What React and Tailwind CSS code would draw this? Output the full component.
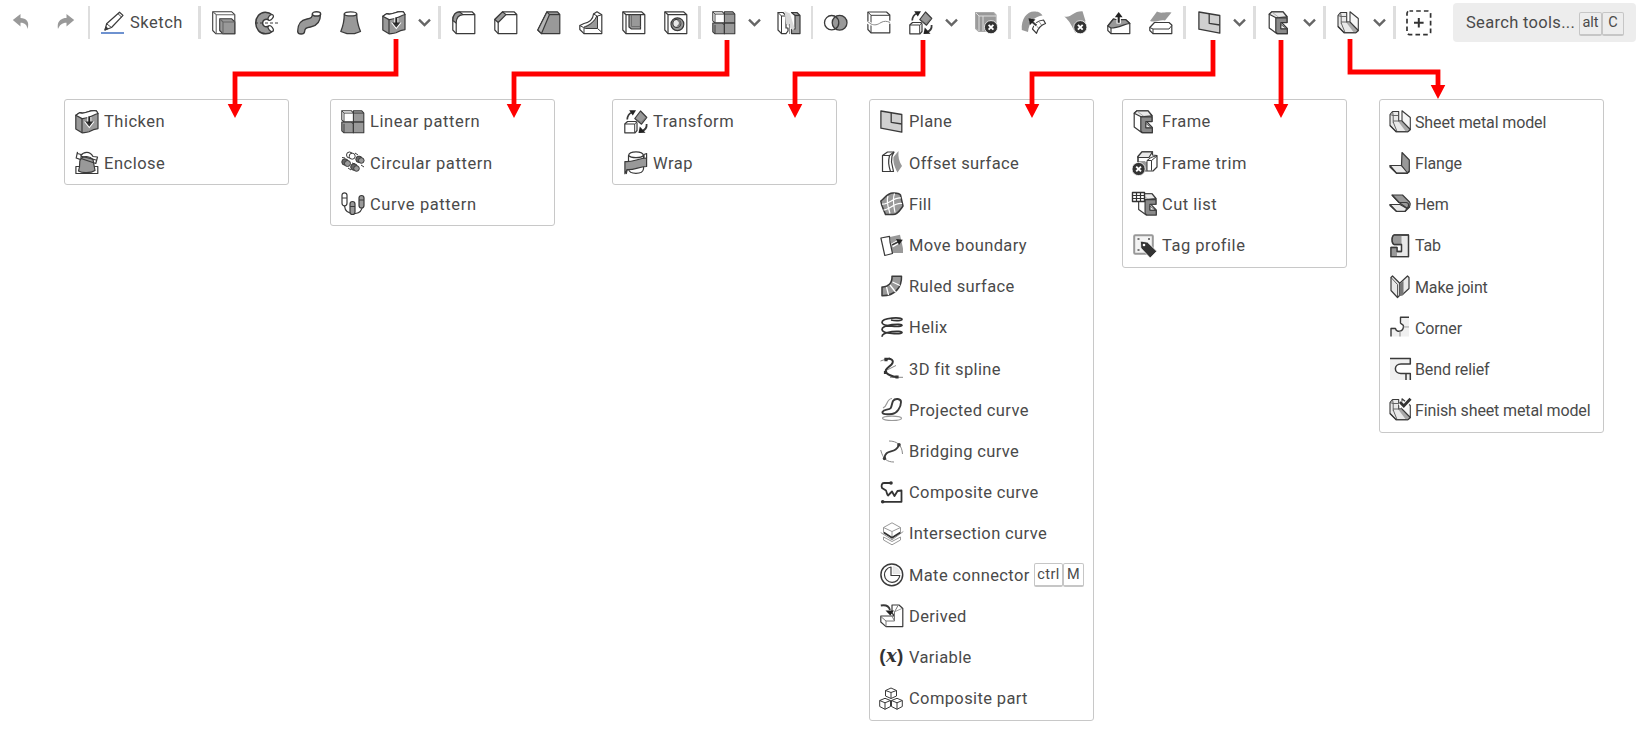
import React from "react";

const D = "#3a3a3a";
const G = "#999999";
const L = "#e9e9e9";
const W = "#ffffff";

function Svg({ children, className = "w-6 h-6", box = "0 0 24 24" }) {
  return (
    <svg
      viewBox={box}
      className={`shrink-0 ${className}`}
      fill="none"
      stroke={D}
      strokeWidth="1.2"
      strokeLinejoin="round"
    >
      {children}
    </svg>
  );
}

const CrossBadge = ({ x, y }) => (
  <g>
    <circle cx={x} cy={y} r="6.6" fill="#333" stroke={W} strokeWidth="0.8" />
    <path d={`M${x - 2.4} ${y - 2.4}l4.8 4.8m0-4.8l-4.8 4.8`} stroke={W} strokeWidth="1.9" />
  </g>
);

const FrameShape = () => (
  <g>
    <path d="M1.2 3.2L4 .8H15L19 5.5V11.5H13.5L19.3 17.5V22.7H9L1.2 17Z" fill={W} />
    <path d="M1.2 3.2L4 .8H15L19 5.8L8 6.8Z" fill={L} />
    <path d="M4.5 1.5L11 6.5" stroke={G} strokeWidth="0.8" />
    <path d="M7.8 6.8H19V11.6H12.8V17.8H19.3V22.7H9.5L7.8 21Z" fill="#8a8a8a" />
    <path d="M13 13.5L18.3 17.6H13Z" fill={L} strokeWidth="0.8" />
  </g>
);

const SheetShape = () => (
  <g strokeWidth="1.1">
    <path d="M1 4.5L3.5 1.5H9.7V11H13L21.3 19.5L19 21.7H7L1 15.5Z" fill={L} />
    <path d="M1 4.5L4.2 5.5V12.5M3.5 1.5L4.2 5.5H9.7M4.2 11H12.5M4.2 12L8 21.5" stroke="#555" strokeWidth="0.9" />
    <path d="M13 11L21.3 19.5L19 21.7H17L9.7 12Z" fill="#a8a8a8" stroke="none" />
    <path d="M13 .8L21.3 7.5V19.5L13 11Z" fill="#f6f6f6" />
    <path d="M1 15.5L7 21.7H19L21.3 19.5" />
  </g>
);

const icons = {
  undo: <path d="M.8 8L8.5 2V6C14 6 18 9.5 15.5 17C15 13 13 10.7 8.5 10.7V14.5Z" fill={G} stroke="none" />,
  redo: <path d="M17.2 8L9.5 2V6C4 6 -.5 9.5 1 17C2.5 13 5 10.7 9.5 10.7V14.5Z" fill={G} stroke="none" />,
  pen: (
    <g>
      <path d="M4 19L5.6 12.8L18.5 1.2L22 4.4L10.5 16.5Z" fill={W} />
      <path d="M5.6 12.8L10.5 16.5M17 2.7L20.5 6" strokeWidth="0.9" />
      <path d="M4 19L5 16L6.7 17.8Z" fill={D} />
      <path d="M0 22H23" stroke="#4a77c4" strokeWidth="1.6" />
    </g>
  ),
  extrude: (
    <g strokeWidth="1.1">
      <path d="M.7.7H19.5L22.8 3.6V22.8H4L.7 19.5Z" fill={W} />
      <path d="M.7.7L4.2 3.7H22.8M4.2 3.7V22.8" stroke="#666" />
      <path d="M7.7 7.7H19.5L22.8 11V22.8H11L7.7 19.5Z" fill={G} />
      <path d="M7.7 7.7L11 11H22.8M11 11V22.8" stroke="#666" />
    </g>
  ),
  revolve: (
    <g>
      <path d="M18.5 4C14 .2 8 .2 4.5 4.3C.8 8.7 .8 15.3 4.5 19.7C8 23.8 15 23.8 19 20L14.5 15.3C10.5 17 8.5 14 8.6 12C8.7 9.6 11 7.3 14.5 8.8Z" fill={G} strokeWidth="1.5" />
      <ellipse cx="16.7" cy="6.4" rx="2" ry="3.3" transform="rotate(40 16.7 6.4)" fill={W} />
      <ellipse cx="16.7" cy="17.6" rx="2" ry="3.3" transform="rotate(-40 16.7 17.6)" fill={W} />
      <path d="M1 12H24" strokeDasharray="3 2" strokeWidth="1" />
    </g>
  ),
  sweep: (
    <g strokeWidth="1.4">
      <path d="M15.5 2.8C15.5 6.5 14 7.3 10 8C4 9 .7 12 .7 20.5C1 23.9 7.2 23.9 7.6 20.5C7.8 17.5 9 16.8 13.5 16C21 14.8 23.5 10 23.5 3Z" fill={G} />
      <ellipse cx="19.5" cy="2.9" rx="4.1" ry="2.1" fill={W} />
    </g>
  ),
  loft: (
    <g strokeWidth="1.3">
      <path d="M4.3 3C4.3 10 3.5 14 .8 20.5L7 22.6H14.5L20.5 20.5C17.8 14 16.7 10 16.7 3Z" fill={G} />
      <ellipse cx="10.5" cy="2.9" rx="6.2" ry="2" fill={W} />
    </g>
  ),
  thicken: (
    <g>
      <path d="M.8 5.2L5 2.6C10 5 14-.6 21.3.8L23 3.5V18.6C19 19 17 20 14 21.8C11 23 9 22.3 7 22.8L.8 19Z" fill={G} />
      <path d="M.8 5.2L5 2.6C10 5 14-.6 21.3.8L23 3.5C18 4.5 14 9 7 8.6Z" fill={W} />
      <path d="M7 8.6V22.8" />
      <path d="M14.3 7V14" stroke={W} strokeWidth="4" />
      <path d="M9.5 11.5L14.3 17.5L19 11.5" fill="#333" stroke={W} strokeWidth="1.2" />
      <path d="M14.3 6.5V13" stroke="#222" strokeWidth="2" />
    </g>
  ),
  fillet: (
    <g>
      <path d="M7.5.8H20L22.8 3.5V22.6H4.2L.8 19V9C.8 4 3.5.8 7.5.8Z" fill={W} />
      <path d="M7.5.8C3.5.8.8 4 .8 9.5L4.2 12C4.2 7 6.5 4 11 3.6Z" fill={G} />
      <path d="M11 3.6H22.8M4.2 12V22.6" />
    </g>
  ),
  chamfer: (
    <g>
      <path d="M8.5.8H20L22.8 3.5V22.6H4.2L.8 19V8.5Z" fill={W} />
      <path d="M8.5.8L.8 8.5L4.2 11.5L12 3.6Z" fill={G} />
      <path d="M12 3.6H22.8M4.2 11.5V22.6" />
    </g>
  ),
  draft: (
    <g>
      <path d="M10 .8H20.5L22.8 3.5V22.6H4.5L.8 19Z" fill={G} />
      <path d="M10 .8L.8 19L4.5 22.6L12.5 3.6Z" fill="#b5b5b5" />
      <path d="M12.5 3.6H22.8" />
    </g>
  ),
  rib: (
    <g>
      <path d="M14.5 3L18 .8L22.8 3.8V22.6H5L.8 18.5V14.5L5 12.5C10 11.5 14 8 14.5 3Z" fill={W} />
      <path d="M4.5 15.5C10 14 16 9 17.5 4.5L18.5 5V17.5H6.5Z" fill={G} stroke="none" />
      <path d="M.8 14.5L4.5 16.5C11 14.5 16 10 17.8 4.8L14.5 3" strokeWidth="1" />
      <path d="M18.5 5V17.5H6.5L5 16.8V22.6M18.5 5L22.8 3.8M18.5 17.5L22.5 21" strokeWidth="1" />
    </g>
  ),
  shell: (
    <g>
      <path d="M.8.8H19.5L22.8 3.7V22.6H4L.8 19Z" fill={W} />
      <path d="M.8.8L4 3.7H22.8M4 3.7V22.6" />
      <path d="M7 3.7H18.5V18H9.5L7 16Z" fill={G} />
      <path d="M9.5 3.7V15.5H18.5" strokeWidth="0.8" stroke="#666" />
    </g>
  ),
  hole: (
    <g>
      <path d="M.8.8H19.5L22.8 3.7V22.6H4L.8 19Z" fill={W} />
      <path d="M.8.8L4 3.7H22.8M4 3.7V22.6" />
      <circle cx="13.4" cy="13.2" r="6.4" fill={G} />
      <circle cx="12.8" cy="12.4" r="4" fill={L} />
      <path d="M13.5 8.8C16.8 10 16.5 14 13.5 15.6" strokeWidth="1.8" stroke="#777" />
    </g>
  ),
  linear: (
    <g strokeWidth="1.1">
      <path d="M.8 12H10.5L12.4 13.8V22.8H3L.8 20.8Z" fill={G} />
      <path d="M12.4.8H20.8L22.8 3V11.8H12.4Z" fill={G} />
      <path d="M12.4 12.2H22.8V22.8H12.4Z" fill={G} />
      <path d="M.8.8H10.5L12.4 3V11.8H3L.8 9.8Z" fill={W} />
      <path d="M.8.8L3 3.1H12.4M3 3.1V11.8M12.4 3.1H22.8M3 13.8V22.8" strokeWidth=".9" />
    </g>
  ),
  mirror: (
    <g>
      <path d="M1 1.5H6L9 4.5V17H11V20L9 22.6H4.5L1 19Z" fill={W} />
      <path d="M1 1.5L4.5 5V22.6M4.5 5H9" strokeWidth="1" />
      <path d="M14.5 1.5H20L23 4.5V22.6H14.5V18H18V4.5Z" fill={G} />
      <path d="M18 4.5H23" />
      <path d="M7.5 0L13 2.5L17.5 17L16 19.5L9 12.5Z" fill="#d9d9d9" stroke="none" />
      <path d="M12.5 13V23" strokeWidth=".8" stroke="#777" />
    </g>
  ),
  boolean: (
    <g strokeWidth="1.3">
      <circle cx="7.7" cy="11.7" r="7.2" />
      <circle cx="15.6" cy="11.7" r="7.4" fill={G} stroke={D} />
      <path d="M11.7 5.8A7.2 7.2 0 0 1 11.7 17.6" />
    </g>
  ),
  split: (
    <g>
      <path d="M.9 1H19.5L22.8 4V21.8H4L.9 18.5Z" fill={W} />
      <path d="M.9 1L4 4.3H22.8M4 4.3V21.8" strokeWidth="1" />
      <path d="M0 11C5 14 8 14.5 13 11.5C17 9.5 19 10 24 11.5" stroke={W} strokeWidth="3" />
      <path d="M.4 10.4L4 13C8 14.5 10 14 14 11.5C17 9.8 20 10 23 11.5" stroke="#888" strokeWidth="1" />
    </g>
  ),
  transform: (
    <g>
      <path d="M.8 14L3.5 11.5H12L13 13V20.5L11 22.8H.8Z" fill={W} />
      <path d="M.8 14H10.7V22.8M10.7 14L13 11.8" strokeWidth="1" />
      <path d="M16.5 1L22.8 7.5L17.5 14.2L10.8 8.5Z" fill={G} />
      <path d="M12.5 9.8L17 12.5L22 7.5" strokeWidth=".7" stroke="#666" />
      <path d="M3.2 9.5C3.5 5.5 5 3.5 8 2.5" strokeWidth="1.7" />
      <path d="M5.2.3L12 .3L8.8 5.5Z" fill="#222" stroke="none" />
      <path d="M22.6 14C23 18 21 20 18 21" strokeWidth="1.8" />
      <path d="M14.5 22.9L15.8 16.5L21.5 22.7Z" fill="#222" stroke="none" />
    </g>
  ),
  deletePart: (
    <g>
      <path d="M.6 1.5H18.5L21 4V14L14 20.5H4L.6 17.5Z" fill={G} stroke="#aaa" />
      <path d="M1 2L4 5H21M4 5V20M8 5V20" stroke="#ddd" strokeWidth="1" />
      <CrossBadge x={16} y={16.2} />
    </g>
  ),
  modifyFillet: (
    <g>
      <path d="M.8 19C0 8 6 .6 13 .6C17 .6 19 1.2 21.5 4.5C14 5 8 11 7 21Z" fill={G} stroke="none" />
      <path d="M11.5 18C13 12.5 17 9.5 22.5 9L24.5 12.5C20 14 17 17 15.5 22.3Z" fill={W} />
      <path d="M14 13.5L18 17.5M18 10.5L20.5 14" strokeWidth=".8" stroke="#777" />
      <path d="M16 15L9 9" strokeWidth="4" stroke={W} />
      <path d="M15.5 14.5L9 9" strokeWidth="2" />
      <path d="M7.5 7.2L14.5 8.4L9 14Z" fill="#222" stroke="none" />
    </g>
  ),
  deleteFace: (
    <g>
      <path d="M.3 5.5C7 7.5 9 0 18.5.3L21.5 10C18 17 14 14 11.5 22C8 16 6 10 .3 5.5Z" fill={G} stroke="none" />
      <CrossBadge x={16.3} y={16.2} />
    </g>
  ),
  moveFace: (
    <g>
      <path d="M.8 15L6.5 8C10 9.5 14 8.5 18.5 8.5L22.8 12.5V22.6H4L.8 19.5Z" fill={W} />
      <path d="M.8 15L6.5 8C10 9.5 14 8.5 18.5 8.5L22.8 12.5C18 12.5 12 17 4 17Z" fill={G} />
      <path d="M4 17V22.6" />
      <path d="M11.7 12.5V5" stroke={W} strokeWidth="4.4" />
      <path d="M11.7 11.8V4" strokeWidth="2.1" stroke="#222" />
      <path d="M7.8 6.2L11.7 1L15.6 6.2Z" fill="#222" stroke="none" />
    </g>
  ),
  replaceFace: (
    <g>
      <path d="M1 10L8 .6C12 3 16 .5 22.5 1.5L16 9.5C11 8 7 12 1 10Z" fill={G} stroke="none" />
      <path d="M.8 16.5L5.5 11.5H20L22.8 14V22.6H4L.8 19.5Z" fill={W} />
      <path d="M.8 16.5L4 18H20L22.8 14.5M4 18V22.6" strokeWidth="1" />
    </g>
  ),
  plane: (
    <g strokeWidth="1.3">
      <path d="M.9 1L21.8 4.5V22.2L.9 18.2Z" fill="#d0d0d0" />
      <path d="M11.2 2.8V12.3L21.8 14" />
    </g>
  ),
  frame: <FrameShape />,
  sheet: <SheetShape />,
  enclose: (
    <g>
      <path d="M.9 15.5H6V19H17.5V15.5H22.8V22.5H.9Z" fill={W} />
      <path d="M5.5 8.5C3.5 10.5 6 14 3.5 20C7 22.3 16 22.3 20 19.5L18 8.5C15 5 8 4 5.5 8.5Z" fill={G} />
      <path d="M2.5.8L1.2 7L5 8.4M5.5 4.8C9 0 15 0 18 5.5L22.5 6L20.8 12.5L6 7.5V3.5L2.5 2.5M5.5 5L21 9" />
    </g>
  ),
  circular: (
    <g strokeWidth="1">
      <circle cx="4" cy="11" r="3.2" fill="#666" />
      <circle cx="6.5" cy="12.5" r="3" fill={G} />
      <circle cx="8.5" cy="4" r="3" fill={W} />
      <circle cx="11.2" cy="5.2" r="3" fill={W} />
      <circle cx="18" cy="8.3" r="3.2" fill="#666" />
      <circle cx="20.3" cy="9.5" r="2.8" fill={G} />
      <circle cx="13" cy="16" r="3.3" fill="#666" />
      <circle cx="15.5" cy="17.5" r="2.8" fill={G} />
      <path d="M1 6.5L4 7M11 12l3 1M20 14l3 2M7 17l3 2M14 2l3 2" />
    </g>
  ),
  curvePattern: (
    <g>
      <path d="M3.5 14C4 19 8 22 14.5 21.5C18 21 21 19 21.3 14" />
      <rect x="1" y=".8" width="5" height="13" rx="2.5" fill={W} />
      <rect x="9" y="9.5" width="5" height="13" rx="2.5" fill={G} />
      <rect x="18" y="3.5" width="5" height="12.5" rx="2.5" fill={G} />
      <path d="M1 6H6M9 14.5H14M18 8H23" strokeWidth="1" />
    </g>
  ),
  wrap: (
    <g>
      <path d="M4.5 18V4.5C5.5-.3 18.5-.3 19.5 4.5V18C18.5 23.8 5.5 23.8 4.5 18Z" fill={W} />
      <path d="M4.5 4.5C7 7.3 17 7.3 19.5 4.5" />
      <path d="M.9 10.5C8 11.5 14 7.5 22.6 7V15.5C14 16 9 19.5 3.2 18.5L.9 22.8Z" fill={G} />
      <path d="M3.2 18.5L2.2 23M20 7V3.5L22.6 2.5V7" />
    </g>
  ),
  offset: (
    <g>
      <path d="M2.5 4.5L7.5 1H14L12 5L11.5 11L13.5 20.5H2.5Z" fill={W} />
      <path d="M2.5 4.5H9.5L14 1M9.5 4.5C8 11 8.5 14 10.5 20.5" />
      <path d="M13.5 6L18.5 0C18 6 19 10 22 15L17.5 21.5C14 15 13 11 13.5 6Z" fill={G} stroke="none" />
    </g>
  ),
  fill: (
    <g>
      <path d="M.8 9C5 6 7 1 13 .9C17 .8 19 .9 20.5 3L23 14C20 18 18 22.5 13 22.6H5.5C4 18 1.5 15 .8 9Z" fill={G} strokeWidth="1.5" />
      <path d="M8 4C6 10 8 14 10 21.5M14.5 1.5C12 8 14 14 15 20.5M2 12C8 13 14 5 21 6M3.5 18C9 18 15 10 22 11.5" stroke={W} strokeWidth="1.2" />
    </g>
  ),
  moveBoundary: (
    <g>
      <path d="M10 3L20 .8L23 14.5V19H12Z" fill={G} stroke="none" />
      <path d="M.9 4L9.5 2.3L10 8L12.5 19.5L4.8 21.5Z" fill={W} />
      <path d="M12 11.5L19 7.5" stroke={W} strokeWidth="4" />
      <path d="M12 11L19 7.5" strokeWidth="1.7" />
      <path d="M16 5L22.8 5.8L19 11Z" fill="#222" stroke="none" />
    </g>
  ),
  ruled: (
    <g>
      <path d="M12 1.2H21.5C22 12 15 21 2 20.8V12C8 12.5 12.5 8 12 1.2Z" fill={G} strokeWidth="1.5" />
      <path d="M12.5 7L20 10.5M10 10L15.5 17M6.5 12L8.5 20" stroke={W} strokeWidth="1.3" />
    </g>
  ),
  helix: (
    <g strokeWidth="1.7" stroke="#333">
      <path d="M11 4C15 5 22 5 22 3.2C22 1 2 1.5 2 6.5C2 10.5 22 11.5 22 9.3C22 7 2 8.5 2 13.5C2 18 22 18.7 22 16.5C22 14.3 2 15 2 20.8" />
    </g>
  ),
  spline: (
    <g stroke="#333">
      <path d="M.5 4L10 .8M5 14L16 8.5M10 20.3H23" stroke="#888" strokeWidth="1" />
      <path d="M5 2.5C11 .5 15 3.5 11.5 7.5C8 11 3.5 13 6.5 16C9 18.5 13 19.5 17 20" strokeWidth="2" />
      <path d="M6 .8v3.4M5.5 14v3M17 18.5v3" strokeWidth="3.2" />
    </g>
  ),
  projected: (
    <g>
      <ellipse cx="12" cy="20.3" rx="9.5" ry="2.2" stroke={G} />
      <path d="M12 .5C6 1 8 8 3 10" stroke={G} />
      <path d="M13 3C15 0 21 .5 21 4C21 9 17 15.5 12 16C8 16.3 1.5 16.8 2.5 13.8C4 10.8 9 12.5 10.8 10C12 7 12 5 13 3Z" strokeWidth="1.9" />
    </g>
  ),
  bridging: (
    <g>
      <path d="M9 1C17 1 22 5 22.5 14M.7 10C3 19 7 22 14 22" stroke="#888" strokeWidth="1" />
      <path d="M4.5 18.5C5 8 16 15 19 4.5" strokeWidth="1.9" />
      <circle cx="4.5" cy="18.5" r="1.7" fill={D} stroke="none" />
      <circle cx="19" cy="4.8" r="1.8" fill={D} stroke="none" />
    </g>
  ),
  compositeCurve: (
    <g stroke="#333">
      <path d="M11 2H4C1.5 2 1.2 5 2 7L6 9.5C7 12 7 14 8 14.5L12 10.5L14.5 15L17.5 10L21.5 9.5V20.8H3" strokeWidth="1.8" />
      <circle cx="11" cy="2" r="1.8" fill="#333" stroke="none" />
      <circle cx="2.7" cy="20.8" r="1.8" fill="#333" stroke="none" />
    </g>
  ),
  intersection: (
    <g stroke={G} strokeWidth="1">
      <path d="M3.5 5.5L12 .8L20.5 5.5L12 9.5ZM3.5 5.5V10.5L12 15.5L20.5 10.5V5.5M12 9.5V15M3.5 15V18L12 22.8L20.5 18V15L12 19.5Z" />
      <path d="M.7 10.5L12 17.8L23.3 9.5" />
      <path d="M3.8 10.5L12 15.8L20.3 10.5" stroke="#333" strokeWidth="1.7" />
    </g>
  ),
  mate: (
    <g>
      <circle cx="11.8" cy="11.8" r="10.9" strokeWidth="1.5" fill={W} />
      <path d="M11 4A7.7 7.7 0 1 0 19.8 12.5H11Z" />
      <path d="M13 3.5A8.5 8.5 0 0 1 20.2 10.5H13Z" fill={L} stroke="#ddd" strokeWidth=".5" />
    </g>
  ),
  derived: (
    <g>
      <path d="M3 12H14.5L12 9V1H19L22.8 4.5V22.6H6L.8 18V12Z" fill={W} />
      <path d="M6 22.6V17H14.5V8L18 1.5M.8 12.5L6 17M14.5 17L12 12" strokeWidth="1" stroke="#777" />
      <path d="M14 8L22 4.5" strokeWidth=".8" stroke="#888" />
      <path d="M.8 1.5C6 .5 9 2.5 10 6" strokeWidth="1.8" />
      <path d="M5.5 6.5H14L10.3 11.5Z" fill="#222" stroke="none" />
    </g>
  ),
  compositePart: (
    <g strokeWidth="1" transform="translate(-1 0)">
      <path d="M6.5 3.5L12 1L17.5 3.5V9L12 11.5L6.5 9ZM6.5 3.5L12 5.5L17.5 3.5M12 5.5V11.5" />
      <path d="M.7 13.5L6 11.3L11.5 13.5V19.5L6 22.3L.7 19.5ZM.7 13.5L6 15.8L11.5 13.5M6 15.8V22.3" />
      <path d="M12.5 13.5L18 11.3L23.3 13.5V19.5L18 22.3L12.5 19.5ZM12.5 13.5L18 15.8L23.3 13.5M18 15.8V22.3" />
    </g>
  ),
  frameTrim: (
    <g>
      <path d="M5 5.5L9 .8H19.5V4L24 4.5V16L20 20H12V11H5Z" fill={W} />
      <path d="M5 5.5L9 .8H19.5L16 6.5H5Z" fill={L} />
      <path d="M5 11H14V19H8Z" fill={G} stroke="none" />
      <path d="M5 5.5V12M14 9.5L18 6.5L24 4.5M14 9.5V20M14 9.5H18.5L24 5M18.5 9.5V19.5" strokeWidth="1" />
      <CrossBadge x={5.6} y={18} />
    </g>
  ),
  cutList: (
    <g>
      <g transform="translate(4.5 1) scale(.97)">
        <FrameShape />
      </g>
      <path d="M-.5.5H11.5V9.5H-.5Z" fill={W} stroke="#333" strokeWidth="1.4" />
      <path d="M-.5 3.5H11.5M-.5 6.5H11.5M3.5.5V9.5M7.5.5V9.5" strokeWidth="1.2" stroke="#333" />
    </g>
  ),
  tag: (
    <g>
      <rect x="1.2" y="1.2" width="18.6" height="18.6" rx="1" fill="#f4f4f4" stroke={G} strokeWidth="2" />
      <path d="M4.5 5h2M15 5h2M4.5 16h2" stroke="#777" strokeWidth="1.8" />
      <path d="M7.5 8.5C7.5 7.5 8 7.2 9 7.2L14.5 8.2L23.8 17.3L17.2 24L7.8 14Z" fill="#333" stroke={W} strokeWidth=".8" />
      <circle cx="11" cy="11" r="1.3" fill={W} stroke="none" />
    </g>
  ),
  flange: (
    <g>
      <path d="M1 14.5H12.5L20 21L18 22.2H7.5Z" fill={L} />
      <path d="M13 1.5L20.3 9V20L18.5 22L12.5 14.5Z" fill={G} />
      <path d="M1 14.5V16L7.5 22.3H18L20.3 20" />
    </g>
  ),
  hem: (
    <g>
      <path d="M1 12.5H11L18 16.5L16 19.3H7.5Z" fill={L} />
      <path d="M3 3H13.5L20.5 10C22 12 21 15 18.5 16.5L10 10.5Z" fill={G} />
      <path d="M3 3L10 10.5H17C20.5 11 20.5 14 17 17.5M1 12.5V13.5L7.5 19.5H16L21 14.5" />
    </g>
  ),
  tab: (
    <g strokeWidth="1.3">
      <path d="M5 1H19.5V22.7H2V13.5H8V17.5H12.5V10.5H5C3 10 3 7.5 3 5.5C3 3 3.5 1.5 5 1Z" fill={L} stroke="#555" />
      <path d="M5 1H12.5V10.5H5C3 9 3 2 5 1ZM2 13.5H8V22.7H2Z" fill={G} stroke="none" />
      <path d="M12.5 10.5H5C2.5 9 2.5 2.5 5 1H19.5V22.7H2V13.5H8V17.5H12.5Z" />
    </g>
  ),
  joint: (
    <g>
      <path d="M2 2.5L3.5 1L11 8.5V20L8.5 22.5L2 15.5Z" fill={L} />
      <path d="M20 2.5L18.5 1L10.5 8.5V20L13 20L20 13.5Z" fill={L} />
      <path d="M10.5 9L14.5 6V19.5L10.5 21Z" fill="#777" stroke="none" />
      <path d="M2 2.5L8.5 9.5V22.5" strokeWidth=".8" />
    </g>
  ),
  corner: (
    <g>
      <path d="M2 11H6C7 15 12 16 14.5 12H20V20.5H2Z" fill="#f0f0f0" stroke="none" />
      <path d="M12 1H20V11H14Z" fill="#f0f0f0" stroke="none" />
      <path d="M2 20.5V12.5H6.5C7.5 17 14.5 16 14.5 10C14.5 8.5 12 8 11.5 7V1.2H20" strokeWidth="1.4" />
      <path d="M14.5 11H20M11 15.5V20.5" stroke={G} />
    </g>
  ),
  bend: (
    <g>
      <path d="M1 1.5H21.3V7H11C5 7.5 5 16 11 16.5H21.3V23H1Z" fill="#f0f0f0" stroke="none" />
      <path d="M1 1.5H21.3V7H12C4.5 7 4.5 16.5 12 16.5H21.3V23M17 16.5V23" strokeWidth="1.5" />
    </g>
  ),
  finish: (
    <g>
      <SheetShape />
      <path d="M11 4.5L15 8.5L21 1.5" stroke={W} strokeWidth="5" />
      <path d="M11 4L14.8 8L21.5.8" stroke="#333" strokeWidth="2.8" strokeLinejoin="miter" />
    </g>
  ),
  addTool: (
    <g>
      <rect x="1" y="1" width="23.6" height="23.6" rx="2.5" strokeWidth="1.7" strokeDasharray="4.6 3.1" strokeDashoffset="1" stroke="#333" />
      <path d="M12.8 8V17.4M8 12.7H17.6" strokeWidth="2" stroke="#333" />
    </g>
  ),
};

function Icon({ name, className = "" }) {
  return <Svg className={`w-6 h-6 overflow-visible ${className}`}>{icons[name]}</Svg>;
}

function Tool({ name, className }) {
  return (
    <button className={`h-6 w-6 shrink-0 ${className}`} aria-label={name}>
      <Icon name={name} />
    </button>
  );
}

const Sep = ({ className = "" }) => <div className={`h-[33px] shrink-0 bg-[#dedede] ${className}`} />;

const Chevron = ({ className }) => (
  <Svg className={`h-6 w-[13px] ${className}`} box="0 0 13 24">
    <path d="M1 8.6L6.5 14L12 8.6" stroke="#666" strokeWidth="2.4" strokeLinejoin="miter" />
  </Svg>
);

const Key = ({ children, className }) => (
  <kbd
    className={`flex shrink-0 items-center justify-center rounded-[2px] border border-b-2 border-[#c6c6c6] font-[Roboto,sans-serif] text-[#4a4a4a] ${className}`}
  >
    {children}
  </kbd>
);

function Toolbar() {
  return (
    <header className="flex h-[45px] w-full items-center">
      <Svg className="ml-3 h-6 w-[18px]" box="0 -1 18 24">{icons.undo}</Svg>
      <Svg className="ml-[27px] h-6 w-[18px]" box="0 -1 18 24">{icons.redo}</Svg>
      <Sep className="ml-[13px] w-[2px]" />
      <Tool name="pen" className="ml-[11px]" />
      <span className="ml-[5px] w-[68px] shrink-0 pt-[2px] text-[16.5px] tracking-[0.5px]">Sketch</span>
      <Sep className="w-[3px]" />
      <Tool name="extrude" className="ml-[11px]" />
      <Tool name="revolve" className="ml-[18px]" />
      <Tool name="sweep" className="ml-[19px]" />
      <Tool name="loft" className="ml-[19px]" />
      <Tool name="thicken" className="ml-[18px]" />
      <Chevron className="ml-3" />
      <Sep className="ml-[7px] w-[3px]" />
      <Tool name="fillet" className="ml-[11px]" />
      <Tool name="chamfer" className="ml-[18px]" />
      <Tool name="draft" className="ml-[19px]" />
      <Tool name="rib" className="ml-[18px]" />
      <Tool name="shell" className="ml-[19px]" />
      <Tool name="hole" className="ml-[18px]" />
      <Sep className="ml-[10px] w-[3px]" />
      <Tool name="linear" className="ml-[11px]" />
      <Chevron className="ml-3" />
      <Tool name="mirror" className="ml-4" />
      <Sep className="ml-[10px] w-[2px]" />
      <Tool name="boolean" className="ml-[11px]" />
      <Tool name="split" className="ml-[19px]" />
      <Tool name="transform" className="ml-[18px]" />
      <Chevron className="ml-3" />
      <Tool name="deletePart" className="ml-[17px]" />
      <Sep className="ml-[9px] w-[3px]" />
      <Tool name="modifyFillet" className="ml-[10px]" />
      <Tool name="deleteFace" className="ml-[19px]" />
      <Tool name="moveFace" className="ml-[19px]" />
      <Tool name="replaceFace" className="ml-[18px]" />
      <Sep className="ml-[10px] w-[3px]" />
      <Tool name="plane" className="ml-3" />
      <Chevron className="ml-[11px]" />
      <Sep className="ml-[7px] w-[3px]" />
      <Tool name="frame" className="ml-3" />
      <Chevron className="ml-[11px]" />
      <Sep className="ml-[7px] w-[3px]" />
      <Tool name="sheet" className="ml-[11px]" />
      <Chevron className="ml-3" />
      <Sep className="ml-[7px] w-[3px]" />
      <Svg className="ml-[10px] h-[26px] w-[26px]" box="0 0 26 26">{icons.addTool}</Svg>
      <div className="ml-[21px] flex h-[39px] w-[183px] shrink-0 items-center rounded-[4px] bg-[#ededed] pl-[13px]">
        <span className="w-[113px] pt-[2px] text-[16.5px] tracking-[0.32px] whitespace-nowrap">Search tools...</span>
        <Key className="mt-[2px] h-[24px] w-[23px] text-[14.5px]">alt</Key>
        <Key className="mt-[2px] h-[24px] w-[22px] text-[14.5px]">C</Key>
      </div>
    </header>
  );
}

function MenuRow({ name, label, keys, narrow }) {
  return (
    <li className="flex h-[41.2px] items-center whitespace-nowrap">
      <span className={narrow ? "flex w-[26px]" : "flex w-[29px]"}>
        {name === "variable" ? (
          <span className="-mt-[3px] -ml-[2px] flex w-[27px] items-center justify-center font-['Liberation_Sans',sans-serif] text-[19px] leading-6 font-bold text-[#333]">
            (<i className="font-['DejaVu_Serif',serif] text-[18px] leading-5">x</i>)
          </span>
        ) : (
          <Icon name={name} />
        )}
      </span>
      <span className={narrow ? "pt-[1.5px] text-[16px] tracking-[-0.13px]" : "pt-[1.5px]"}>{label}</span>
      {keys && (
        <span className="ml-auto flex pr-[9px]">
          <Key className="h-6 w-[29px] text-[14.5px]">ctrl</Key>
          <Key className="h-6 w-[21px] text-[14.5px]">M</Key>
        </span>
      )}
    </li>
  );
}

function Menu({ items, className, narrow }) {
  return (
    <ul className={`w-[225px] shrink-0 rounded-[3px] border border-[#c8c8c8] bg-white pt-[1.5px] text-[16.5px] ${className}`}>
      {items.map(([name, label, keys]) => (
        <MenuRow key={name} name={name} label={label} keys={keys} narrow={narrow} />
      ))}
    </ul>
  );
}

const surfaceItems = [
  ["thicken", "Thicken"],
  ["enclose", "Enclose"],
];
const patternItems = [
  ["linear", "Linear pattern"],
  ["circular", "Circular pattern"],
  ["curvePattern", "Curve pattern"],
];
const transformItems = [
  ["transform", "Transform"],
  ["wrap", "Wrap"],
];
const planeItems = [
  ["plane", "Plane"],
  ["offset", "Offset surface"],
  ["fill", "Fill"],
  ["moveBoundary", "Move boundary"],
  ["ruled", "Ruled surface"],
  ["helix", "Helix"],
  ["spline", "3D fit spline"],
  ["projected", "Projected curve"],
  ["bridging", "Bridging curve"],
  ["compositeCurve", "Composite curve"],
  ["intersection", "Intersection curve"],
  ["mate", "Mate connector", true],
  ["derived", "Derived"],
  ["variable", "Variable"],
  ["compositePart", "Composite part"],
];
const frameItems = [
  ["frame", "Frame"],
  ["frameTrim", "Frame trim"],
  ["cutList", "Cut list"],
  ["tag", "Tag profile"],
];
const sheetItems = [
  ["sheet", "Sheet metal model"],
  ["flange", "Flange"],
  ["hem", "Hem"],
  ["tab", "Tab"],
  ["joint", "Make joint"],
  ["corner", "Corner"],
  ["bend", "Bend relief"],
  ["finish", "Finish sheet metal model"],
];

function Arrows() {
  return (
    <svg
      className="pointer-events-none absolute top-0 left-0 h-[731px] w-[1641px]"
      viewBox="0 0 1641 731"
      fill="none"
      stroke="#ff0000"
      strokeWidth="4.8"
    >
      <path d="M396 39V74H235V106M727 40V74H514V106M923 40V74H795V106M1213 40V74H1032V106M1281 40V106M1350 39V72H1438V87" />
      <g fill="#ff0000" stroke="none">
        <path d="M227.7 104h14.6l-7.3 14zM506.7 104h14.6l-7.3 14zM787.7 104h14.6l-7.3 14zM1024.7 104h14.6l-7.3 14zM1273.7 104h14.6l-7.3 14zM1430.7 85h14.6l-7.3 14z" />
      </g>
    </svg>
  );
}

export default function App() {
  return (
    <div className="relative h-[731px] w-[1641px] overflow-hidden bg-white font-[Roboto,sans-serif] text-[#4a4a4a]">
      <Toolbar />
      <main className="mt-[54px] flex items-start pl-16">
        <Menu items={surfaceItems} className="h-[86px] pl-[10px] tracking-[0.5px]" />
        <Menu items={patternItems} className="ml-[41px] h-[127px] pl-[10px] tracking-[0.6px]" />
        <Menu items={transformItems} className="ml-[57px] h-[86px] pl-[11px] tracking-[0.55px]" />
        <Menu items={planeItems} className="ml-8 h-[622px] pl-[10px] tracking-[0.37px]" />
        <Menu items={frameItems} className="ml-7 h-[169px] pl-[10px] tracking-[0.5px]" />
        <Menu items={sheetItems} narrow className="ml-8 h-[334px] pl-[9px]" />
      </main>
      <Arrows />
    </div>
  );
}
